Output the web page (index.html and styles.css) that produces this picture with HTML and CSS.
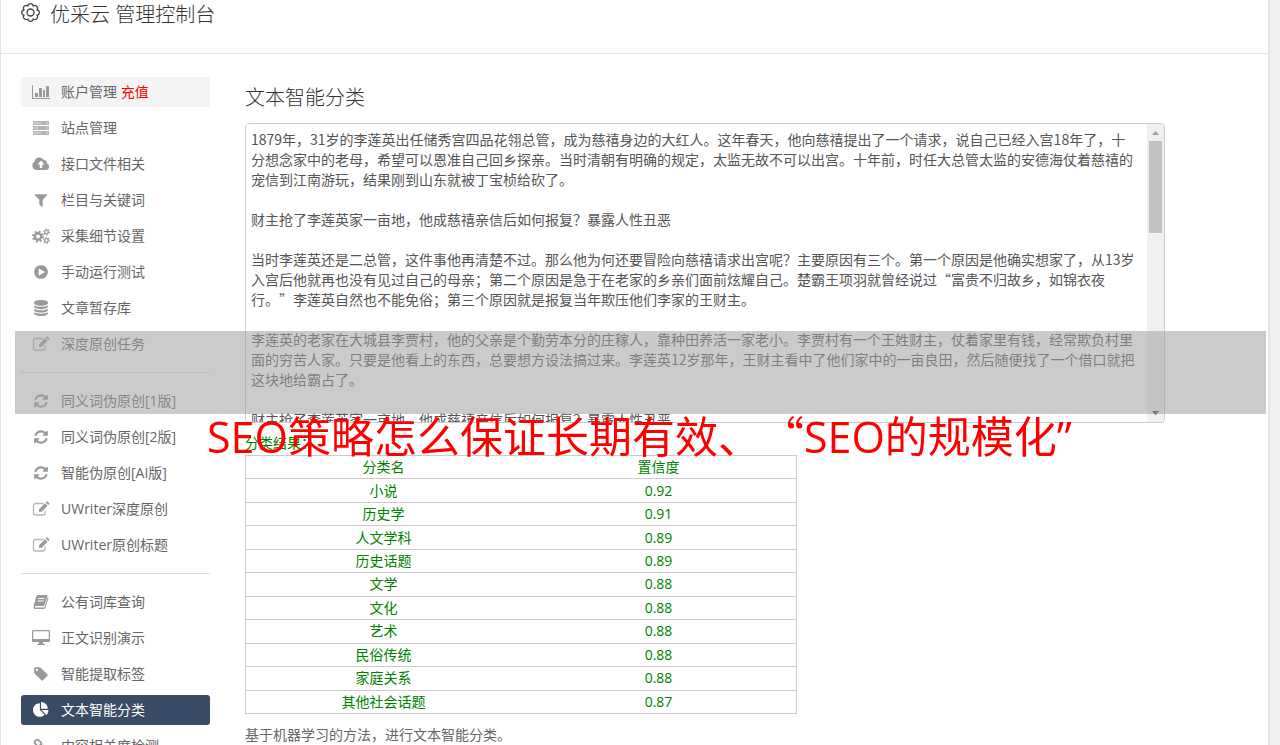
FILE: index.html
```html
<!DOCTYPE html>
<html lang="zh-CN">
<head>
<meta charset="utf-8">
<title>优采云 管理控制台</title>
<link rel="stylesheet" href="styles.css">
</head>
<body>

<svg class="sprite" aria-hidden="true">
  <symbol id="i-chart" viewBox="0 0 20 16"><path d="M1 1h1v13h17v1H1zM4 9h3v4H4zM8 4h3v9H8zM12 6h2v7h-2zM15 2h3v11h-3z"/></symbol>
  <symbol id="i-server" viewBox="0 0 20 16"><path fill-opacity=".75" d="M2 1h16v4H2zM2 6h16v4H2zM2 11h16v4H2z"/><path stroke="#fff" stroke-opacity=".7" d="M3 3h7M3 8h4M3 13h7M15 3h2M15 8h2M15 13h2"/></symbol>
  <symbol id="i-cloud" viewBox="0 0 20 16"><path fill-rule="evenodd" d="M5.500 14A4.500 4.500 0 0 1 3.500 5.700 5 5 0 0 1 12.800 4a3 3 0 0 1 3.200 3.400A3.500 3.500 0 0 1 15.500 14zM10 4.500L6.500 8.500H8.800V12h2.400V8.500h2.300z"/></symbol>
  <symbol id="i-filter" viewBox="0 0 1792 1792"><path d="M1595 295q17 41-14 70l-493 493v742q0 42-39 59-13 5-25 5-27 0-45-19l-256-256q-19-19-19-45v-486l-493-493q-31-29-14-70 17-39 59-39h1280q42 0 59 39z"/></symbol>
  <symbol id="i-cogs" viewBox="0 0 20 16"><g fill="none" stroke="currentColor"><circle cx="7" cy="8.500" r="3.200" stroke-width="2.400"/><circle cx="7" cy="8.500" r="5" stroke-width="2" stroke-dasharray="2 1.927"/><circle cx="15.500" cy="4" r="1.800" stroke-width="1.300"/><circle cx="15.500" cy="4" r="2.800" stroke-width="1.200" stroke-dasharray="1.300 1.632"/><circle cx="15.500" cy="12.500" r="1.800" stroke-width="1.300"/><circle cx="15.500" cy="12.500" r="2.800" stroke-width="1.200" stroke-dasharray="1.300 1.632"/></g></symbol>
  <symbol id="i-play" viewBox="0 0 1792 1792"><path d="M896 128q209 0 385.500 103t279.500 279.500 103 385.500-103 385.500-279.500 279.500-385.500 103-385.500-103-279.500-279.500-103-385.500 103-385.500 279.500-279.500 385.500-103zm384 823q32-18 32-55t-32-55l-544-320q-31-19-64-1-32 19-32 56v640q0 37 32 56 16 8 32 8 17 0 32-9z"/></symbol>
  <symbol id="i-database" viewBox="0 0 1792 1792"><path d="M896 768q237 0 443-43t325-127v170q0 69-103 128t-280 93.500-385 34.500-385-34.500-280-93.500-103-128v-170q119 84 325 127t443 43zm0 768q237 0 443-43t325-127v170q0 69-103 128t-280 93.500-385 34.500-385-34.500-280-93.500-103-128v-170q119 84 325 127t443 43zm0-384q237 0 443-43t325-127v170q0 69-103 128t-280 93.500-385 34.500-385-34.500-280-93.500-103-128v-170q119 84 325 127t443 43zm0-1152q208 0 385 34.500t280 93.500 103 128v128q0 69-103 128t-280 93.500-385 34.500-385-34.500-280-93.500-103-128v-128q0-69 103-128t280-93.500 385-34.500z"/></symbol>
  <symbol id="i-edit" viewBox="0 0 20 16"><path fill="none" stroke="currentColor" stroke-opacity=".7" stroke-width="1.300" d="M12.500 2.500H4.500a2 2 0 0 0-2 2v7.500a2 2 0 0 0 2 2H12a2 2 0 0 0 2-2V9.500"/><path d="M8 8.200l6-6 2.600 2.600-6 6H8zM14.700 1.500l.9-.9q.5-.4 1 0l1.600 1.600q.4.500 0 1l-.9.900z"/></symbol>
  <symbol id="i-refresh" viewBox="0 0 1792 1792"><path d="M1639 1056q0 5-1 7-64 268-268 434.500t-478 166.500q-146 0-282.500-55t-243.500-157l-129 129q-19 19-45 19t-45-19-19-45v-448q0-26 19-45t45-19h448q26 0 45 19t19 45-19 45l-137 137q71 66 161 102t187 36q134 0 250-65t186-179q11-17 53-117 8-23 30-23h192q13 0 22.500 9.500t9.500 22.500zm25-800v448q0 26-19 45t-45 19h-448q-26 0-45-19t-19-45 19-45l138-138q-148-137-349-137-134 0-250 65t-186 179q-11 17-53 117-8 23-30 23h-199q-13 0-22.500-9.500t-9.500-22.500v-7q65-268 270-434.500t480-166.500q146 0 284 55.500t245 156.500l130-129q19-19 45-19t45 19 19 45z"/></symbol>
  <symbol id="i-book" viewBox="0 0 20 16"><path fill-rule="evenodd" d="M7 1h8.500q1.300 0 .9 1.300L13.600 11q-.3 1-1.300 1H4.500q-1 .2-.6 1 .2.500 1 .500H13.500L16.800 3q1 .4.600 1.400L14.600 13.600Q14.200 15 12.800 15H4.500Q2 15 2.600 12.200L5 3Q5.500 1 7 1zM7.500 4l-.3 1h6l.3-1zM6.800 6.500l-.3 1h6l.3-1z"/></symbol>
  <symbol id="i-desktop" viewBox="0 0 20 16"><path fill-rule="evenodd" d="M2 0h16q1 0 1 1v10q0 1-1 1h-6l.5 2H14v1H6v-1h1.500L8 12H2q-1 0-1-1V1q0-1 1-1zM2.200 1.200v7.800h15.600V1.200z"/></symbol>
  <symbol id="i-tag" viewBox="0 0 1792 1792"><path d="M576 448q0-53-37.500-90.500t-90.500-37.500-90.500 37.500-37.500 90.500 37.500 90.500 90.500 37.500 90.500-37.500 37.500-90.500zm1067 576q0 53-37 90l-491 492q-39 37-91 37-53 0-90-37l-715-716q-38-37-64.500-101t-26.500-117v-416q0-52 38-90t90-38h416q53 0 117 26.500t102 64.500l715 714q37 39 37 91z"/></symbol>
  <symbol id="i-pie" viewBox="0 0 1792 1792"><path d="M768 890l546 546q-106 108-247.500 168t-298.500 60q-209 0-385.500-103t-279.500-279.500-103-385.500 103-385.500 279.500-279.500 385.500-103v762zm187 6h773q0 157-60 298.500t-168 247.500zm709-128h-768v-768q209 0 385.500 103t279.500 279.500 103 385.500z"/></symbol>
  <symbol id="i-link" viewBox="0 0 20 16"><g fill="none" stroke="currentColor" stroke-width="1.800"><rect x="-3.500" y="-2.500" width="7" height="5" rx="2.500" transform="translate(7 5) rotate(45)"/><rect x="-3.500" y="-2.500" width="7" height="5" rx="2.500" transform="translate(13 11) rotate(45)"/><path d="M8.500 6.500l3 3"/></g></symbol>
</svg>

<div class="page">
  <header class="header">
    <svg class="gear" viewBox="0 0 18 18" aria-hidden="true"><path d="M6.130 2.070A2.900 2.900 0 0 1 11.870 2.070A2.900 2.900 0 0 1 15.930 6.130A2.900 2.900 0 0 1 15.930 11.870A2.900 2.900 0 0 1 11.870 15.930A2.900 2.900 0 0 1 6.130 15.930A2.900 2.900 0 0 1 2.070 11.870A2.900 2.900 0 0 1 2.070 6.130A2.900 2.900 0 0 1 6.130 2.070z" transform="translate(1 1) scale(.89)"/><circle cx="9" cy="9" r="3.300"/></svg>
    <h1 class="title">优采云 管理控制台</h1>
  </header>

  <div class="layout">
    <nav class="sidebar">
      <a class="nav-item hover" href="#"><svg class="icon"><use href="#i-chart"/></svg><span>账户管理 <em class="recharge">充值</em></span></a>
      <a class="nav-item" href="#"><svg class="icon"><use href="#i-server"/></svg>站点管理</a>
      <a class="nav-item" href="#"><svg class="icon"><use href="#i-cloud"/></svg>接口文件相关</a>
      <a class="nav-item" href="#"><svg class="icon"><use href="#i-filter"/></svg>栏目与关键词</a>
      <a class="nav-item" href="#"><svg class="icon"><use href="#i-cogs"/></svg>采集细节设置</a>
      <a class="nav-item" href="#"><svg class="icon"><use href="#i-play"/></svg>手动运行测试</a>
      <a class="nav-item" href="#"><svg class="icon"><use href="#i-database"/></svg>文章暂存库</a>
      <a class="nav-item" href="#"><svg class="icon"><use href="#i-edit"/></svg>深度原创任务</a>
      <hr class="divider">
      <a class="nav-item" href="#"><svg class="icon"><use href="#i-refresh"/></svg>同义词伪原创[1版]</a>
      <a class="nav-item" href="#"><svg class="icon"><use href="#i-refresh"/></svg>同义词伪原创[2版]</a>
      <a class="nav-item" href="#"><svg class="icon"><use href="#i-refresh"/></svg>智能伪原创[AI版]</a>
      <a class="nav-item" href="#"><svg class="icon"><use href="#i-edit"/></svg>UWriter深度原创</a>
      <a class="nav-item" href="#"><svg class="icon"><use href="#i-edit"/></svg>UWriter原创标题</a>
      <hr class="divider">
      <a class="nav-item" href="#"><svg class="icon"><use href="#i-book"/></svg>公有词库查询</a>
      <a class="nav-item" href="#"><svg class="icon"><use href="#i-desktop"/></svg>正文识别演示</a>
      <a class="nav-item" href="#"><svg class="icon"><use href="#i-tag"/></svg>智能提取标签</a>
      <a class="nav-item active" href="#"><svg class="icon"><use href="#i-pie"/></svg>文本智能分类</a>
      <a class="nav-item" href="#"><svg class="icon"><use href="#i-link"/></svg>内容相关度检测</a>
    </nav>

    <main class="main">
      <h2 class="subtitle"><label for="content">文本智能分类</label></h2>
      <div class="editor">
        <textarea class="editor-text" id="content" spellcheck="false">1879年，31岁的李莲英出任储秀宫四品花翎总管，成为慈禧身边的大红人。这年春天，他向慈禧提出了一个请求，说自己已经入宫18年了，十分想念家中的老母，希望可以恩准自己回乡探亲。当时清朝有明确的规定，太监无故不可以出宫。十年前，时任大总管太监的安德海仗着慈禧的宠信到江南游玩，结果刚到山东就被丁宝桢给砍了。

财主抢了李莲英家一亩地，他成慈禧亲信后如何报复？暴露人性丑恶

当时李莲英还是二总管，这件事他再清楚不过。那么他为何还要冒险向慈禧请求出宫呢？主要原因有三个。第一个原因是他确实想家了，从13岁入宫后他就再也没有见过自己的母亲；第二个原因是急于在老家的乡亲们面前炫耀自己。楚霸王项羽就曾经说过“富贵不归故乡，如锦衣夜行。”李莲英自然也不能免俗；第三个原因就是报复当年欺压他们李家的王财主。

李莲英的老家在大城县李贾村，他的父亲是个勤劳本分的庄稼人，靠种田养活一家老小。李贾村有一个王姓财主，仗着家里有钱，经常欺负村里面的穷苦人家。只要是他看上的东西，总要想方设法搞过来。李莲英12岁那年，王财主看中了他们家中的一亩良田，然后随便找了一个借口就把这块地给霸占了。

财主抢了李莲英家一亩地，他成慈禧亲信后如何报复？暴露人性丑恶</textarea>
        <div class="scrollbar">
          <svg class="arrow up" viewBox="0 0 17 17"><path d="M5 11h7L8.500 7z"/></svg>
          <div class="thumb"></div>
          <svg class="arrow down" viewBox="0 0 17 17"><path d="M5 6h7L8.500 10z"/></svg>
        </div>
      </div>
      <p class="result-label">分类结果：</p>
      <table class="result">
        <tr><th>分类名</th><th>置信度</th></tr>
        <tr><td>小说</td><td>0.92</td></tr>
        <tr><td>历史学</td><td>0.91</td></tr>
        <tr><td>人文学科</td><td>0.89</td></tr>
        <tr><td>历史话题</td><td>0.89</td></tr>
        <tr><td>文学</td><td>0.88</td></tr>
        <tr><td>文化</td><td>0.88</td></tr>
        <tr><td>艺术</td><td>0.88</td></tr>
        <tr><td>民俗传统</td><td>0.88</td></tr>
        <tr><td>家庭关系</td><td>0.88</td></tr>
        <tr><td>其他社会话题</td><td>0.87</td></tr>
      </table>
      <p class="note">基于机器学习的方法，进行文本智能分类。</p>
    </main>
  </div>

  <div class="band"></div>
  <div class="banner">SEO策略怎么保证长期有效、<span class="quote">“</span>SEO的规模化”</div>
</div>

</body>
</html>
```
FILE: styles.css
```css
* {
  box-sizing: border-box;
}

body {
  margin: 0;
  background: #f0f0f0;
  font-family: "Open Sans", "Noto Sans CJK SC", sans-serif;
  font-size: 14px;
  line-height: 20px;
  color: #666;
  text-spacing-trim: space-all;
}

.sprite {
  display: none;
}

.page {
  position: relative;
  margin-right: 10px;
  height: 100vh;
  overflow: hidden;
  background: #fff;
  border-left: 1px solid #e5e5e5;
  border-right: 2px solid #e5e5e5;
}

.header {
  display: flex;
  gap: 10px;
  height: 54px;
  padding-left: 20px;
  border-bottom: 1px solid #e5e5e5;
}

.gear {
  width: 19px;
  height: 19px;
  margin-top: 3px;
  fill: none;
  stroke: #444;
  stroke-width: 1.3;
}

.title,
.subtitle {
  margin: 0;
  font-size: 20px;
  line-height: 30px;
  font-weight: 300;
  color: #333;
}

.layout {
  display: flex;
  gap: 35px;
  padding: 23px 20px 0;
}

/* 左侧菜单 */
.sidebar {
  display: flex;
  flex-direction: column;
  flex: 0 0 189px;
  gap: 6px;
}

.nav-item {
  display: flex;
  align-items: center;
  gap: 10px;
  height: 30px;
  padding-left: 10px;
  border-radius: 3px;
  color: #666;
  text-decoration: none;
}

.nav-item.hover {
  background: #f4f4f4;
}

.nav-item.active {
  background: #3a4b66;
  color: #fff;
}

.icon {
  width: 20px;
  height: 16px;
  color: #999;
  fill: currentColor;
}

.active .icon {
  color: #fff;
}

.recharge {
  color: #f00;
  font-style: normal;
}

.divider {
  width: 100%;
  margin: 7px 0;
  border: 0;
  border-top: 1px solid #ddd;
}

/* 右侧内容 */
.main {
  flex: 1;
  max-width: 920px;
  padding-top: 6px;
}

.editor {
  display: flex;
  height: 300px;
  margin-top: 10px;
  border: 1px solid #ccc;
  border-radius: 4px;
  overflow: hidden;
}

.editor-text {
  flex: 1;
  padding: 5px 9px 5px 5px;
  border: 0;
  outline: 0;
  resize: none;
  scrollbar-width: none;
  background: #fff;
  color: #555;
  font: 14px/20px "Noto Sans CJK SC", sans-serif;
  text-spacing-trim: space-all;
}

.scrollbar {
  display: flex;
  flex-direction: column;
  width: 17px;
  background: #f0f0f0;
}

.arrow {
  width: 17px;
  height: 17px;
  fill: #a0a0a0;
}

.arrow.down {
  margin-top: auto;
  fill: #444;
}

.thumb {
  height: 92px;
  margin: 0 2px;
  background: #c1c1c1;
}

.result-label {
  margin: 10px 0 2px;
  color: #008000;
}

.result {
  width: 60%;
  height: 259px;
  table-layout: fixed;
  border-collapse: collapse;
  border: 1px solid #ccc;
  color: #008000;
  text-align: center;
}

.result th,
.result td {
  padding: 0;
  border-bottom: 1px solid #ccc;
  font-weight: 400;
}

.note {
  margin: 11px 0 0;
}

/* 横幅遮罩 */
.band {
  position: absolute;
  top: 331px;
  left: 14px;
  right: 2px;
  height: 83px;
  background: rgba(160, 160, 160, 0.55);
}

.banner {
  position: absolute;
  top: 404px;
  left: 206px;
  font-size: 43px;
  line-height: 60px;
  color: #f00;
  white-space: nowrap;
}

.quote {
  font-family: "Noto Sans CJK SC", sans-serif;
}
```
